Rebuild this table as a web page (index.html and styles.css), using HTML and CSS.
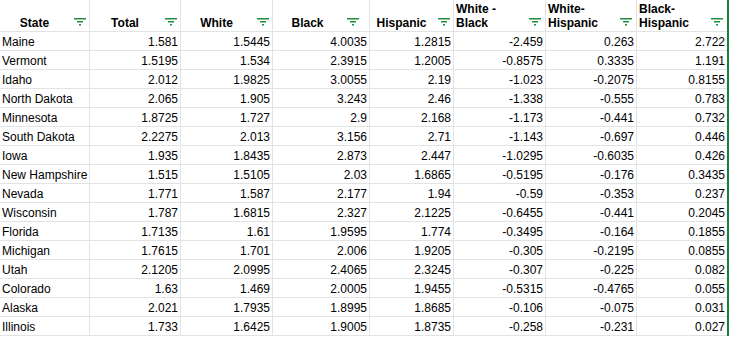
FILE: index.html
```html
<!DOCTYPE html>
<html lang="en">
<head>
    <meta charset="UTF-8">
    <meta name="viewport" content="width=device-width, initial-scale=1.0">
    <title>Index by State</title>
    <link rel="stylesheet" href="styles.css">
</head>
<body>

    <svg width="0" height="0" class="defs">
        <symbol id="filter" viewBox="0 0 12 8">
            <rect x="0" y="0" width="12" height="1.5"/>
            <rect x="3" y="3" width="6" height="1.5"/>
            <rect x="5" y="6" width="2" height="1.5"/>
        </symbol>
    </svg>

    <div class="sheet">
        <!-- header row -->
        <div class="cell head"><span class="label">State</span><svg class="filter"><use href="#filter"/></svg></div>
        <div class="cell head"><span class="label">Total</span><svg class="filter"><use href="#filter"/></svg></div>
        <div class="cell head"><span class="label">White</span><svg class="filter"><use href="#filter"/></svg></div>
        <div class="cell head head-black"><span class="label">Black</span><svg class="filter"><use href="#filter"/></svg></div>
        <div class="cell head"><span class="label">Hispanic</span><svg class="filter"><use href="#filter"/></svg></div>
        <div class="cell head wrap"><span class="label">White -<br>Black</span><svg class="filter"><use href="#filter"/></svg></div>
        <div class="cell head wrap"><span class="label">White-<br>Hispanic</span><svg class="filter"><use href="#filter"/></svg></div>
        <div class="cell head wrap"><span class="label">Black-<br>Hispanic</span><svg class="filter"><use href="#filter"/></svg></div>

        <div class="cell">Maine</div>
        <div class="cell num">1.581</div><div class="cell num">1.5445</div><div class="cell num">4.0035</div><div class="cell num">1.2815</div>
        <div class="cell num">-2.459</div><div class="cell num">0.263</div><div class="cell num">2.722</div>

        <div class="cell">Vermont</div>
        <div class="cell num">1.5195</div><div class="cell num">1.534</div><div class="cell num">2.3915</div><div class="cell num">1.2005</div>
        <div class="cell num">-0.8575</div><div class="cell num">0.3335</div><div class="cell num">1.191</div>

        <div class="cell">Idaho</div>
        <div class="cell num">2.012</div><div class="cell num">1.9825</div><div class="cell num">3.0055</div><div class="cell num">2.19</div>
        <div class="cell num">-1.023</div><div class="cell num">-0.2075</div><div class="cell num">0.8155</div>

        <div class="cell">North Dakota</div>
        <div class="cell num">2.065</div><div class="cell num">1.905</div><div class="cell num">3.243</div><div class="cell num">2.46</div>
        <div class="cell num">-1.338</div><div class="cell num">-0.555</div><div class="cell num">0.783</div>

        <div class="cell">Minnesota</div>
        <div class="cell num">1.8725</div><div class="cell num">1.727</div><div class="cell num">2.9</div><div class="cell num">2.168</div>
        <div class="cell num">-1.173</div><div class="cell num">-0.441</div><div class="cell num">0.732</div>

        <div class="cell">South Dakota</div>
        <div class="cell num">2.2275</div><div class="cell num">2.013</div><div class="cell num">3.156</div><div class="cell num">2.71</div>
        <div class="cell num">-1.143</div><div class="cell num">-0.697</div><div class="cell num">0.446</div>

        <div class="cell">Iowa</div>
        <div class="cell num">1.935</div><div class="cell num">1.8435</div><div class="cell num">2.873</div><div class="cell num">2.447</div>
        <div class="cell num">-1.0295</div><div class="cell num">-0.6035</div><div class="cell num">0.426</div>

        <div class="cell">New Hampshire</div>
        <div class="cell num">1.515</div><div class="cell num">1.5105</div><div class="cell num">2.03</div><div class="cell num">1.6865</div>
        <div class="cell num">-0.5195</div><div class="cell num">-0.176</div><div class="cell num">0.3435</div>

        <div class="cell">Nevada</div>
        <div class="cell num">1.771</div><div class="cell num">1.587</div><div class="cell num">2.177</div><div class="cell num">1.94</div>
        <div class="cell num">-0.59</div><div class="cell num">-0.353</div><div class="cell num">0.237</div>

        <div class="cell">Wisconsin</div>
        <div class="cell num">1.787</div><div class="cell num">1.6815</div><div class="cell num">2.327</div><div class="cell num">2.1225</div>
        <div class="cell num">-0.6455</div><div class="cell num">-0.441</div><div class="cell num">0.2045</div>

        <div class="cell">Florida</div>
        <div class="cell num">1.7135</div><div class="cell num">1.61</div><div class="cell num">1.9595</div><div class="cell num">1.774</div>
        <div class="cell num">-0.3495</div><div class="cell num">-0.164</div><div class="cell num">0.1855</div>

        <div class="cell">Michigan</div>
        <div class="cell num">1.7615</div><div class="cell num">1.701</div><div class="cell num">2.006</div><div class="cell num">1.9205</div>
        <div class="cell num">-0.305</div><div class="cell num">-0.2195</div><div class="cell num">0.0855</div>

        <div class="cell">Utah</div>
        <div class="cell num">2.1205</div><div class="cell num">2.0995</div><div class="cell num">2.4065</div><div class="cell num">2.3245</div>
        <div class="cell num">-0.307</div><div class="cell num">-0.225</div><div class="cell num">0.082</div>

        <div class="cell">Colorado</div>
        <div class="cell num">1.63</div><div class="cell num">1.469</div><div class="cell num">2.0005</div><div class="cell num">1.9455</div>
        <div class="cell num">-0.5315</div><div class="cell num">-0.4765</div><div class="cell num">0.055</div>

        <div class="cell">Alaska</div>
        <div class="cell num">2.021</div><div class="cell num">1.7935</div><div class="cell num">1.8995</div><div class="cell num">1.8685</div>
        <div class="cell num">-0.106</div><div class="cell num">-0.075</div><div class="cell num">0.031</div>

        <div class="cell">Illinois</div>
        <div class="cell num">1.733</div><div class="cell num">1.6425</div><div class="cell num">1.9005</div><div class="cell num">1.8735</div>
        <div class="cell num">-0.258</div><div class="cell num">-0.231</div><div class="cell num">0.027</div>
    </div>

</body>
</html>
```

FILE: styles.css
```css
:root {
    --grid-line: #e2e3e3;
    --filter-green: #1e8e3e;
    --select-green: #188038;
}

body {
    margin: 0;
    background-color: #ffffff;
    font-family: "Liberation Sans", Arial, sans-serif;
    font-size: 12px;
    color: #000000;
}

.defs {
    position: absolute;
}

.sheet {
    display: grid;
    grid-template-columns: 89px 90px 91px 96px 83px 91px 90px 90px;
    grid-template-rows: 31px;
    grid-auto-rows: 18px;
    gap: 1px;
    width: max-content;
    padding-bottom: 1px;
    background-color: var(--grid-line);
    border-right: 2px solid var(--select-green);
}

.cell {
    display: flex;
    align-items: flex-end;
    padding: 0 2px 1px;
    line-height: 14px;
    background-color: #ffffff;
    white-space: nowrap;
    overflow: hidden;
}

.cell.num {
    justify-content: flex-end;
}

.head {
    padding: 0 0 1px;
    font-weight: bold;
}

.head .label {
    flex: 1;
    text-align: center;
}

.head.wrap .label {
    padding-left: 2px;
    text-align: left;
}

.filter {
    flex: none;
    width: 12px;
    height: 8px;
    margin: 0 3px 4px 5px;
    fill: var(--filter-green);
}

.head.wrap .filter {
    margin-right: 4px;
}

.head-black .filter {
    margin-right: 10px;
}
```
